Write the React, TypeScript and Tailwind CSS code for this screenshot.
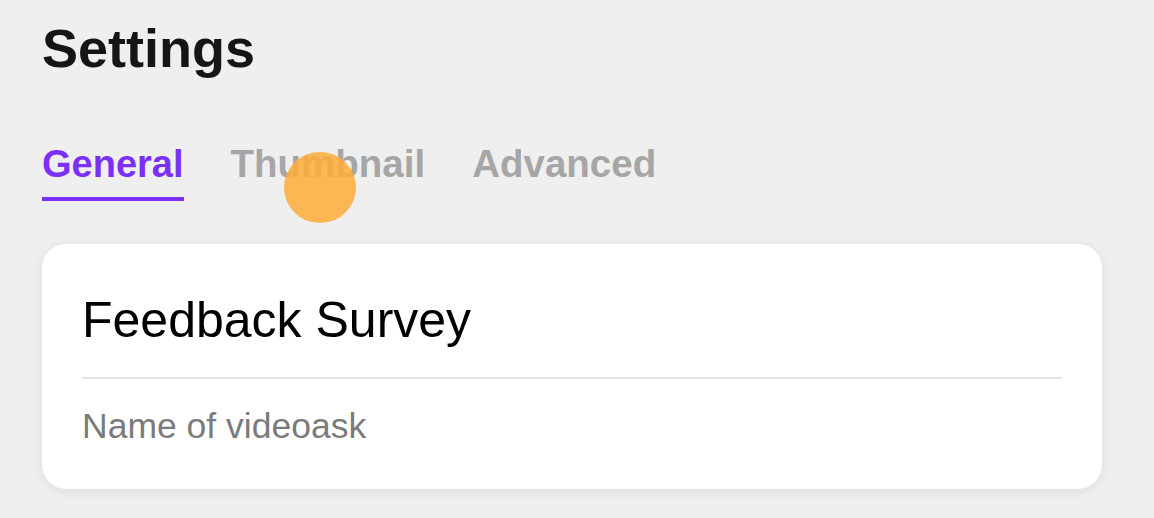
const tabs = ['General', 'Thumbnail', 'Advanced']

const App = () => {
    const active = 'General'

    return (
        <div className="min-h-[518px] w-full bg-[#efefef] pl-[42px] pr-[52px] pt-[17px] font-['Liberation_Sans',Arial,sans-serif]">
            <h1 className="text-[54px] font-bold leading-[62px] text-[#151515]">Settings</h1>

            <div className="relative mt-[62px] flex gap-[47px]">
                {tabs.map((tab) => (
                    <div key={tab} className="flex flex-col">
                        <span
                            className={
                                tab === active
                                    ? 'text-[38px] font-bold leading-[46px] text-[#7b2ff7]'
                                    : 'text-[38.5px] font-bold leading-[46px] text-[#a6a6a6]'
                            }
                        >
                            {tab}
                        </span>
                        <div className={tab === active ? 'mt-[10px] h-[4px] bg-[#7b2ff7]' : 'mt-[10px] h-[4px]'} />
                    </div>
                ))}
                {/* touch indicator */}
                <div className="absolute left-[242px] top-[11px] h-[71px] w-[72px] rounded-full bg-[#feab37]/85" />
            </div>

            <div className="mt-[43px] rounded-[24px] bg-white px-10 pb-[42px] pt-[46px] shadow-[0_2px_12px_rgba(0,0,0,0.08)]">
                <div className="text-[50px] leading-[60px] text-black">Feedback Survey</div>
                <div className="mt-[27px] h-[2px] bg-[#e6e6e6]" />
                <div className="mt-[26px] text-[35.5px] leading-[42px] text-[#7b7b7b]">Name of videoask</div>
            </div>
        </div>
    )
}

export default App
